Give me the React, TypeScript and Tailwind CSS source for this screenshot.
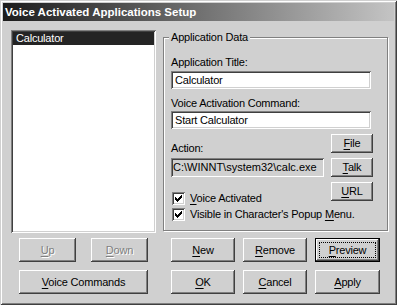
const raised =
  "shadow-[inset_-1px_-1px_#404040,inset_1px_1px_#ffffff,inset_-2px_-2px_#808080,inset_2px_2px_#d0d0d0]";
const sunken =
  "shadow-[inset_1px_1px_#808080,inset_-1px_-1px_#ffffff,inset_2px_2px_#404040,inset_-2px_-2px_#d0d0d0]";

/* ---- Mnemonic underline ---- */

function U({ c }: { c: string }) {
  return <span className="underline decoration-1 underline-offset-[2px]">{c}</span>;
}

interface BtnProps {
  children: React.ReactNode;
  className?: string;
  disabled?: boolean;
}

function Btn({ children, className = "", disabled }: BtnProps) {
  return (
    <div
      className={`flex items-center justify-center bg-[#d0d0d0] ${raised} ${className} ${
        disabled ? "text-[#808080] [text-shadow:1px_1px_0_#ffffff]" : "text-black"
      }`}
    >
      <span>{children}</span>
    </div>
  );
}

/* ---- Default button with focus rect ---- */

function DefaultBtn({ children }: { children: React.ReactNode }) {
  return (
    <div className="ml-[8px] h-[24px] w-[65px] border border-black">
      <div className={`relative flex h-full w-full items-center justify-center bg-[#d0d0d0] ${raised}`}>
        <span className="absolute inset-[3px] border border-dotted border-black" />
        <span>{children}</span>
      </div>
    </div>
  );
}

/* ---- Checkbox (Win2k check mark, 7x7 px) ---- */

const CHECK = ["......#", ".....##", "#...###", "##.###.", "#####..", ".###...", "..#...."];

function CheckBox({ label }: { label: React.ReactNode }) {
  return (
    <div className="flex h-[13px] items-center whitespace-nowrap">
      <div className={`ml-[1px] h-[13px] w-[13px] shrink-0 bg-white ${sunken}`}>
        <svg width="13" height="13" viewBox="0 0 13 13" shapeRendering="crispEdges">
          {CHECK.map((row, y) =>
            row.split("").map((ch, x) =>
              ch === "#" ? <rect key={`${x}-${y}`} x={x + 3} y={y + 3} width="1" height="1" fill="#000" /> : null,
            ),
          )}
        </svg>
      </div>
      <span className="ml-[5px]">{label}</span>
    </div>
  );
}

export default function App() {
  return (
    <div className="h-[305px] w-[397px] overflow-hidden bg-[#d0d0d0] p-[3px] font-['Liberation_Sans',Arial,sans-serif] text-[11px] leading-[13px] tracking-[-0.2px] text-black shadow-[inset_1px_1px_#d0d0d0,inset_-1px_-1px_#404040,inset_2px_2px_#ffffff,inset_-2px_-2px_#808080]">
      {/* Title bar */}
      <div className="flex h-[18px] items-center bg-[linear-gradient(to_right,#1c1c1c,#c4c4c4)] pl-[2px] text-[11.5px] font-bold tracking-normal text-white">
        Voice Activated Applications Setup
      </div>

      {/* Listbox + group box */}
      <div className="flex pl-[8px] pt-[9px]">
        <div className={`h-[203px] w-[145px] bg-white p-[2px] ${sunken}`}>
          <div className="h-[13px] bg-[#242424] pl-[3px] text-white">Calculator</div>
        </div>

        <div className="relative ml-[7px] mt-[7px] h-[194px] w-[225px] border border-[#808080] pl-[7px] pt-[18px] shadow-[inset_1px_1px_#ffffff,1px_1px_#ffffff]">
          <span className="absolute left-[5px] top-[-7px] bg-[#d0d0d0] px-[2px]">Application Data</span>

          <div className="h-[13px]">Application Title:</div>
          <div className={`mt-[2px] flex h-[18px] w-[200px] items-center bg-white pl-[4px] ${sunken}`}>Calculator</div>

          <div className="mt-[8px] h-[13px]">Voice Activation Command:</div>
          <div className={`mt-[1px] flex h-[18px] w-[200px] items-center bg-white pl-[4px] ${sunken}`}>
            Start Calculator
          </div>

          <div className="mt-[5px] flex">
            <div className="w-[153px]">
              <div className="h-[21px] pt-[8px]">Action:</div>
              <div
                className={`mt-[3px] flex h-[19px] w-[153px] items-center bg-[#d0d0d0] pl-[2px] tracking-normal whitespace-nowrap ${sunken}`}
              >
                C:\WINNT\system32\calc.exe
              </div>
              <div className="mt-[15px] flex flex-col gap-[3px]">
                <CheckBox label={<><U c="V" />oice Activated</>} />
                <CheckBox label={<>Visible in Character's Popup <U c="M" />enu.</>} />
              </div>
            </div>
            <div className="ml-[7px] flex flex-col gap-[5px]">
              <Btn className="h-[19px] w-[42px]"><U c="F" />ile</Btn>
              <Btn className="h-[19px] w-[42px]"><U c="T" />alk</Btn>
              <Btn className="h-[19px] w-[42px]"><U c="U" />RL</Btn>
            </div>
          </div>
        </div>
      </div>

      {/* Button rows */}
      <div className="mt-[5px] flex pl-[16px]">
        <Btn disabled className="h-[24px] w-[57px]"><U c="U" />p</Btn>
        <Btn disabled className="ml-[15px] h-[24px] w-[57px]"><U c="D" />own</Btn>
        <Btn className="ml-[23px] h-[24px] w-[64px]"><U c="N" />ew</Btn>
        <Btn className="ml-[8px] h-[24px] w-[64px]"><U c="R" />emove</Btn>
        <DefaultBtn><U c="P" />review</DefaultBtn>
      </div>
      <div className="mt-[8px] flex pl-[16px]">
        <Btn className="h-[24px] w-[129px]"><U c="V" />oice Commands</Btn>
        <Btn className="ml-[23px] h-[24px] w-[64px]"><U c="O" />K</Btn>
        <Btn className="ml-[8px] h-[24px] w-[64px]"><U c="C" />ancel</Btn>
        <Btn className="ml-[8px] h-[24px] w-[65px]"><U c="A" />pply</Btn>
      </div>
    </div>
  );
}
